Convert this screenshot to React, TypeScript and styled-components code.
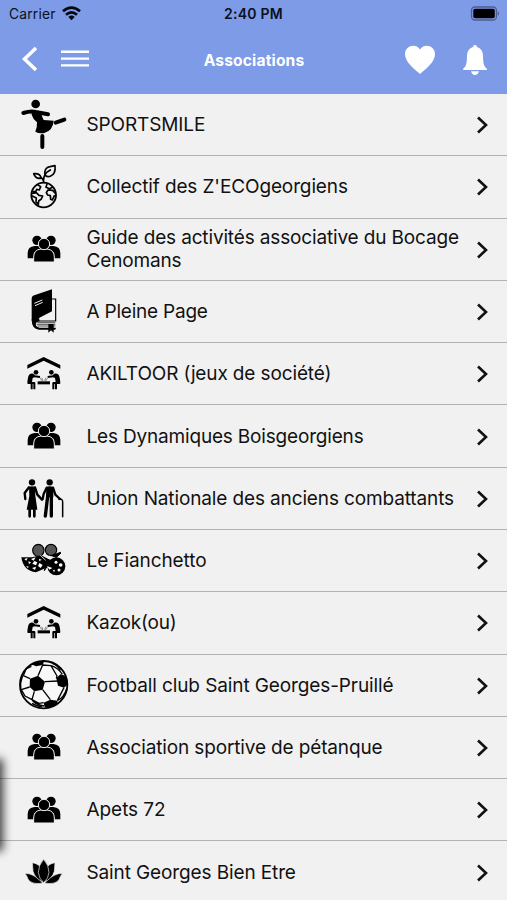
import React from "react";
import styled, { createGlobalStyle } from "styled-components";

const GlobalStyle = createGlobalStyle`
  * { box-sizing: border-box; }
  body { margin: 0; background: #f1f1f1; overflow: hidden; }
`;

const Screen = styled.main`
  position: relative;
  width: 507px;
  height: 900px;
  overflow: hidden;
  background: #f1f1f1;
  color: #111;
  font-family: Inter, "Liberation Sans", sans-serif;
`;

const Header = styled.header`
  height: 94px;
  background: #7d9be7;
`;

const StatusBar = styled.div`
  display: grid;
  grid-template-columns: 1fr auto 1fr;
  align-items: center;
  height: 27px;
  padding: 0 7px 0 9px;
  color: #0b1020;
`;

const Carrier = styled.div`
  display: flex;
  align-items: center;
  gap: 6px;
  font-size: 13.8px;
  letter-spacing: 0.2px;
`;

const Clock = styled.div`
  position: relative;
  left: -1px;
  font-size: 14px;
  font-weight: 600;
  letter-spacing: 0.25px;
`;

const BatteryIcon = styled.svg`
  justify-self: end;
  display: block;
`;

const NavBar = styled.nav`
  display: grid;
  grid-template-columns: 1fr auto 1fr;
  align-items: center;
  height: 66px;
  padding: 0 20px 0 21px;
`;

const NavGroup = styled.div<{ $gap: number; $end?: boolean }>`
  display: flex;
  align-items: center;
  justify-content: ${(p) => (p.$end ? "flex-end" : "flex-start")};
  gap: ${(p) => p.$gap}px;
  margin-bottom: ${(p) => (p.$end ? 0 : 2)}px;
`;

const NavButton = styled.button`
  display: flex;
  padding: 0;
  border: 0;
  background: none;
  color: #fff;
`;

const Title = styled.h1`
  margin: 0;
  color: #fff;
  font-size: 15.6px;
  font-weight: 700;
  letter-spacing: 0.15px;
`;

const List = styled.ul`
  margin: 0;
  padding: 0;
  list-style: none;
`;

const Row = styled.li`
  display: flex;
  align-items: center;
  height: 62.29px;
  padding: 0 18px 0 10px;
  border-bottom: 1.5px solid #b3b3b3;
`;

const RowIcon = styled.svg`
  flex: none;
  width: 70px;
  height: 62px;
  fill: #000;
  stroke: #000;
  stroke-width: 0;
`;

const Label = styled.span<{ $spacing: number }>`
  flex: 1;
  margin-left: 6.5px;
  font-size: 19px;
  line-height: 23px;
  letter-spacing: ${(p) => p.$spacing}px;
  white-space: pre;
`;

const Chevron = styled.svg`
  flex: none;
  margin-top: 1px;
`;

const DrawerShadow = styled.div`
  position: absolute;
  left: -12px;
  top: 762px;
  width: 12px;
  height: 86px;
  box-shadow: 0 0 10px 3px rgba(0, 0, 0, 0.75);
`;

const Dancer = () => (
  <g strokeLinecap="round" strokeLinejoin="round">
    <circle cx="77" cy="30" r="13" />
    <path d="M40 57 Q62 50 77 54 L114 61" fill="none" strokeWidth="12" />
    <path d="M65 53 L94 53 Q94 67 101 78 L131 80 Q129 109 103 117 Q88 120 76 113 Q82 100 81 85 Q69 76 65 62Z" />
    <path d="M137 86 L163 77M97 126V159" fill="none" strokeWidth="12" />
  </g>
);

const Planet = () => (
  <g strokeLinecap="round" strokeLinejoin="round">
    <circle cx="101" cy="117" r="37" fill="none" strokeWidth="5.5" />
    <path d="M101 79 Q99 61 110 49 L121 42M101 77 Q99 67 91 65" fill="none" strokeWidth="5" />
    <path d="M105 58 Q101 35 120 32 L135 29 Q138 55 121 61 Q113 64 105 58ZM91 67 Q77 69 71 53 Q89 51 93 64" fill="none" strokeWidth="5" />
    <path d="M84 87 L92 92 L88 102 L80 100 L78 106 L70 107M67 112 L79 110 L87 118 L98 120 L94 129 L86 135 L85 145 L78 138 L79 126 L67 120M111 84 L108 94 L119 98 L127 94M109 110 L114 102 L128 103 L135 111M109 110 L113 117 L121 119 L122 130 L127 132 L133 119" fill="none" strokeWidth="5" />
  </g>
);

const People = () => (
  <g>
    <circle cx="81" cy="67" r="14" />
    <circle cx="123" cy="67" r="14" />
    <path d="M53 121V105Q53 86 74 84H130Q151 86 151 105V121H132V103H72V121Z" />
    <path d="M71 132V117Q71 95 93 93H111Q133 95 133 117V132Z" stroke="#f1f1f1" strokeWidth="3" />
    <circle cx="102" cy="78" r="17" stroke="#f1f1f1" strokeWidth="3" />
  </g>
);

const Book = () => (
  <g>
    <path d="M65 56 Q65 47 75 45 L126 28V94L87 114Q75 118 73 132Q66 130 65 119Z" />
    <path d="M73 70 L97 60M75 77 L98 67" fill="none" stroke="#f1f1f1" strokeWidth="3" />
    <path d="M126 57H137V123H86Q75 124 75 133Q75 143 88 145H137" fill="none" strokeWidth="3.5" />
    <path d="M65 118Q65 148 87 149H136V144H89Q77 143 77 133Q77 125 89 124L87 114Z" />
    <path d="M82 128H136M80 133H136M82 138H136" fill="none" strokeWidth="2" />
    <path d="M115 132H131V158L123 151L115 158Z" />
  </g>
);

const Shelter = () => (
  <g>
    <path d="M52 66 L101 42 L151 66V77L101 53L52 77Z" />
    <circle cx="78" cy="88" r="7" />
    <circle cx="124" cy="88" r="7" />
    <g fill="none" strokeWidth="6" strokeLinejoin="round">
      <path d="M90 102L74 100Q67 91 60 97Q56 101 55 120H73V139M65 122V139" />
      <path d="M113 102L129 100Q136 91 143 97Q147 101 148 120H130V139M138 122V139" />
    </g>
    <path d="M60 94L70 94L75 102L68 105L66 117H55ZM143 94L133 94L128 102L135 105L137 117H148Z" />
    <path d="M83 115H120V124H83Z" />
    <path d="M91 105L94 112H99L95 104M112 105L109 112H104L108 104" fill="none" stroke="#777" strokeWidth="2.5" />
  </g>
);

const Elders = () => (
  <g strokeLinecap="round" strokeLinejoin="round">
    <circle cx="66" cy="46" r="9.5" />
    <circle cx="119" cy="46" r="9.5" />
    <path d="M57 60 Q66 55 75 60L76 86L82 128H50L58 87Z" />
    <path d="M57 61L44 78L46 96M75 61L82 83L96 98" fill="none" strokeWidth="7" />
    <path d="M59 128V148M73 128V148" fill="none" strokeWidth="8" />
    <path d="M109 60Q119 55 130 60V91H108Z" />
    <path d="M110 62L101 81L98 96M129 62L136 83L150 96" fill="none" strokeWidth="7" />
    <path d="M113 88L106 147M124 88L124 147" fill="none" strokeWidth="10" />
    <path d="M147 97Q158 94 158 105V149" fill="none" strokeWidth="4.5" />
  </g>
);

const Games = () => (
  <g>
    <g fill="#555" strokeWidth="3.5">
      <ellipse cx="85" cy="61" rx="17" ry="18" />
      <ellipse cx="123" cy="60" rx="17" ry="17" />
    </g>
    <path d="M34 82H66L79 79L98 78L113 88L106 115L78 127Q40 123 34 82Z" />
    <path d="M92 78L101 85L98 93L110 98L103 122L123 92Z" strokeWidth="3" />
    <circle cx="139" cy="109" r="27" />
    <path d="M151 67L153 69L139 82L125 77Z" strokeWidth="3" />
    <g fill="#fff">
      <path d="M43 87L53 84L49 92ZM63 87L77 82L71 92ZM55 94L63 97L57 103ZM48 108L57 110L53 114ZM73 93L82 97L78 106L67 101ZM87 86L95 89L88 94ZM66 114L78 110L75 120ZM88 99L98 105L92 114L84 108Z" />
      <circle cx="138" cy="97" r="4.5" />
      <circle cx="152" cy="105" r="5.5" />
      <circle cx="147" cy="120" r="4.5" />
      <circle cx="132" cy="122" r="2.5" />
      <path d="M111 108L127 114L118 119Z" />
    </g>
    <path d="M91 76L107 91M119 77V85" stroke="#fff" strokeWidth="2.5" />
  </g>
);

const Football = () => (
  <g strokeLinejoin="round">
    <circle cx="101" cy="92" r="71" fill="#f8f8f8" strokeWidth="5.5" />
    <path d="M60 74L84 65L105 83L98 107L73 112L59 99ZM139 73L151 61L166 65L174 91L162 101L144 95ZM101 146L121 137L142 140L143 149Q124 163 104 160ZM64 31Q80 22 102 23L98 33L78 37ZM33 67L40 65L34 86L34 107Q27 90 33 67Z" />
    <path d="M98 33L123 35L141 66L139 73M98 33L84 65M60 74L40 65L48 45L64 37M105 83L144 81M98 107L121 137M73 112L66 137L45 126L34 107L59 99M66 137L87 148L101 146M162 101L142 140M123 35Q144 41 157 61M142 140Q162 131 170 104M66 137Q73 151 102 156" fill="none" strokeWidth="4" />
    <path d="M126 28Q140 30 151 49M66 148Q79 157 96 157" fill="none" strokeWidth="4.5" />
  </g>
);

const Lotus = () => (
  <g stroke="#f1f1f1" strokeWidth="2">
    <path d="M45 98Q57 96 69 103Q88 111 98 126Q67 132 55 116Q51 104 45 98ZM157 98Q145 96 133 103Q114 111 104 126Q135 132 147 116Q151 104 157 98Z" />
    <path d="M67 65Q86 68 96 84L101 124Q75 113 69 91ZM135 65Q116 68 106 84L101 124Q127 113 133 91Z" />
    <path d="M101 55Q117 73 117 94Q116 112 101 125Q86 112 85 94Q85 73 101 55Z" />
  </g>
);

type Entry = { label: string; icon: () => React.ReactElement; spacing: number };

const entries: Entry[] = [
  { label: "SPORTSMILE", icon: Dancer, spacing: -0.12 },
  { label: "Collectif des Z'ECOgeorgiens", icon: Planet, spacing: -0.12 },
  { label: "Guide des activités associative du Bocage\nCenomans", icon: People, spacing: -0.15 },
  { label: "A Pleine Page", icon: Book, spacing: -0.22 },
  { label: "AKILTOOR (jeux de société)", icon: Shelter, spacing: -0.13 },
  { label: "Les Dynamiques Boisgeorgiens", icon: People, spacing: -0.18 },
  { label: "Union Nationale des anciens combattants", icon: Elders, spacing: -0.13 },
  { label: "Le Fianchetto", icon: Games, spacing: -0.1 },
  { label: "Kazok(ou)", icon: Shelter, spacing: -0.2 },
  { label: "Football club Saint Georges-Pruillé", icon: Football, spacing: -0.11 },
  { label: "Association sportive de pétanque", icon: People, spacing: -0.14 },
  { label: "Apets 72", icon: People, spacing: -0.06 },
  { label: "Saint Georges Bien Etre", icon: Lotus, spacing: -0.12 },
];

export default function App() {
  return (
    <Screen>
      <GlobalStyle />
      <Header>
        <StatusBar>
          <Carrier>
            Carrier
            <svg width="19" height="15" viewBox="0 0 19 15" fill="none" stroke="#05070d" strokeWidth="2.7">
              <path d="M1 5.3Q9.5-2.2 18 5.3M4 8.7Q9.5 4 15 8.7" />
              <path d="M6.3 11Q9.5 8.2 12.7 11L9.5 14.2Z" fill="#05070d" stroke="none" />
            </svg>
          </Carrier>
          <Clock>2:40 PM</Clock>
          <BatteryIcon width="30" height="15" viewBox="0 0 30 15">
            <rect x="1.5" y="1" width="25" height="13" rx="3.5" fill="none" stroke="#4c5f91" strokeWidth="1.3" />
            <rect x="3.3" y="2.8" width="21.5" height="9.4" rx="1.7" fill="#000" />
            <path d="M27.8 5.2Q30.5 7.5 27.8 9.8Z" fill="#4c5f91" />
          </BatteryIcon>
        </StatusBar>
        <NavBar>
          <NavGroup $gap={23}>
            <NavButton aria-label="Retour">
              <svg width="17" height="26" viewBox="0 0 17 26" fill="none" stroke="currentColor" strokeWidth="3.5">
                <path d="M15 2L3.5 13L15 24" />
              </svg>
            </NavButton>
            <NavButton aria-label="Menu">
              <svg width="28" height="20" viewBox="0 0 28 20" stroke="currentColor" strokeWidth="2.4">
                <path d="M0 2.8H28M0 9.6H28M0 16.4H28" />
              </svg>
            </NavButton>
          </NavGroup>
          <Title>Associations</Title>
          <NavGroup $gap={27} $end>
            <NavButton aria-label="Favoris">
              <svg width="32" height="30" viewBox="0 0 32 30" fill="currentColor">
                <path d="M16 29C10.5 24 1 17.5 1 9C1 1.5 11-2.5 16 4.5C21-2.5 31 1.5 31 9C31 17.5 21.5 24 16 29Z" />
              </svg>
            </NavButton>
            <NavButton aria-label="Notifications">
              <svg width="24" height="30" viewBox="0 0 24 30" fill="currentColor">
                <path d="M12 0Q14 0 14 2Q20 4 20 11Q20 19 22 22Q24 23 24 25H0Q0 23 2 22Q4 19 4 11Q4 4 10 2Q10 0 12 0ZM8 26.3H16Q15 30 12 30Q9 30 8 26.3Z" />
              </svg>
            </NavButton>
          </NavGroup>
        </NavBar>
      </Header>
      <List>
        {entries.map(({ label, icon: Icon, spacing }) => (
          <Row key={label}>
            <RowIcon viewBox="0 0 210 186">
              <Icon />
            </RowIcon>
            <Label $spacing={spacing}>{label}</Label>
            <Chevron width="14" height="20" viewBox="0 0 14 20" fill="none" stroke="#111" strokeWidth="2.6">
              <path d="M3 2.5L11 10L3 17.5" />
            </Chevron>
          </Row>
        ))}
      </List>
      <DrawerShadow />
    </Screen>
  );
}
